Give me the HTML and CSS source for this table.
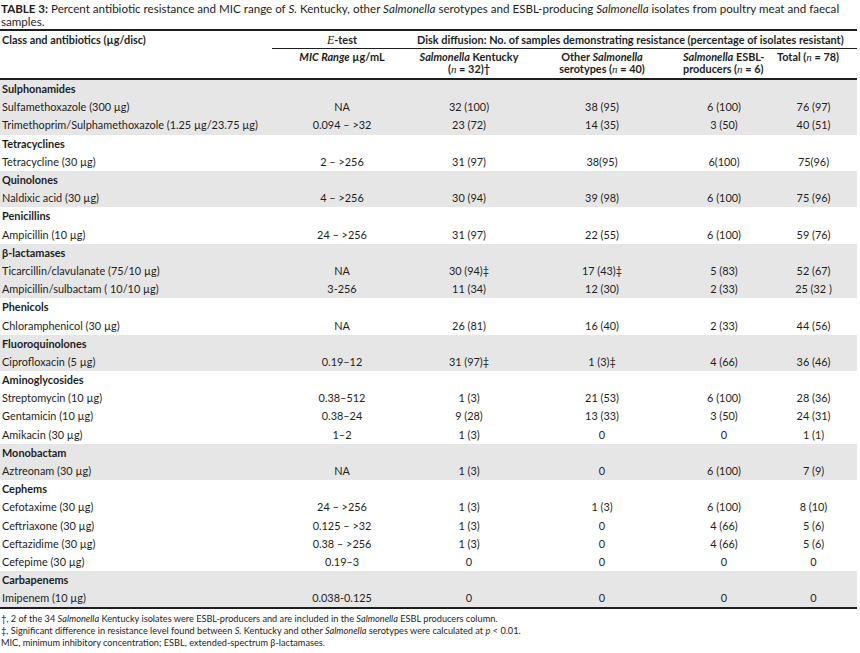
FILE: index.html
```html
<!DOCTYPE html>
<html>
<head>
<meta charset="utf-8">
<link rel="stylesheet" href="styles.css">
</head>
<body>
<p class="title"><b>TABLE 3:</b> Percent antibiotic resistance and MIC range of <i>S.</i> Kentucky, other <i>Salmonella</i> serotypes and ESBL-producing <i>Salmonella</i> isolates from poultry meat and faecal<br><span>samples.</span></p>
<table class="tbl">
<colgroup>
<col class="c1"><col class="c2"><col class="c3"><col class="c4"><col class="c5"><col class="c6">
</colgroup>
<thead>
<tr class="h1">
<th class="lead" rowspan="2">Class and antibiotics (µg/disc)</th>
<th class="etest"><span class="serif-i">E</span>-test</th>
<th class="disk" colspan="4">Disk diffusion: No. of samples demonstrating resistance (percentage of isolates resistant)</th>
</tr>
<tr class="h2">
<th class="mid"><i>MIC Range</i> µg/mL</th>
<th class="mid"><i>Salmonella</i> Kentucky<br>(<span class="n">n</span> = 32)†</th>
<th class="mid">Other <i>Salmonella</i><br>serotypes (<span class="n">n</span> = 40)</th>
<th class="left">
<i>Salmonella</i> ESBL-<br>producers (<span class="n">n</span> = 6)</th>
<th class="left tot">Total (<span class="n">n</span> = 78)</th>
</tr>
</thead>
<tbody class="gray">
<tr><td class="grp" colspan="6">Sulphonamides</td></tr>
<tr><td>Sulfamethoxazole (300 µg)</td><td>NA</td><td>32 (100)</td><td>38 (95)</td><td>6 (100)</td><td>76 (97)</td></tr>
<tr><td>Trimethoprim/Sulphamethoxazole (1.25 µg/23.75 µg)</td><td>0.094 – &gt;32</td><td>23 (72)</td><td>14 (35)</td><td>3 (50)</td><td>40 (51)</td></tr>
</tbody>
<tbody>
<tr><td class="grp" colspan="6">Tetracyclines</td></tr>
<tr><td>Tetracycline (30 µg)</td><td>2 – &gt;256</td><td>31 (97)</td><td>38(95)</td><td>6(100)</td><td>75(96)</td></tr>
</tbody>
<tbody class="gray">
<tr><td class="grp" colspan="6">Quinolones</td></tr>
<tr><td>Naldixic acid (30 µg)</td><td>4 – &gt;256</td><td>30 (94)</td><td>39 (98)</td><td>6 (100)</td><td>75 (96)</td></tr>
</tbody>
<tbody>
<tr><td class="grp" colspan="6">Penicillins</td></tr>
<tr><td>Ampicillin (10 µg)</td><td>24 – &gt;256</td><td>31 (97)</td><td>22 (55)</td><td>6 (100)</td><td>59 (76)</td></tr>
</tbody>
<tbody class="gray">
<tr><td class="grp" colspan="6">β-lactamases</td></tr>
<tr><td>Ticarcillin/clavulanate (75/10 µg)</td><td>NA</td><td>30 (94)‡</td><td>17 (43)‡</td><td>5 (83)</td><td>52 (67)</td></tr>
<tr><td>Ampicillin/sulbactam ( 10/10 µg)</td><td>3-256</td><td>11 (34)</td><td>12 (30)</td><td>2 (33)</td><td>25 (32 )</td></tr>
</tbody>
<tbody>
<tr><td class="grp" colspan="6">Phenicols</td></tr>
<tr><td>Chloramphenicol (30 µg)</td><td>NA</td><td>26 (81)</td><td>16 (40)</td><td>2 (33)</td><td>44 (56)</td></tr>
</tbody>
<tbody class="gray">
<tr><td class="grp" colspan="6">Fluoroquinolones</td></tr>
<tr><td>Ciprofloxacin (5 µg)</td><td>0.19–12</td><td>31 (97)‡</td><td>1 (3)‡</td><td>4 (66)</td><td>36 (46)</td></tr>
</tbody>
<tbody>
<tr><td class="grp" colspan="6">Aminoglycosides</td></tr>
<tr><td>Streptomycin (10 µg)</td><td>0.38–512</td><td>1 (3)</td><td>21 (53)</td><td>6 (100)</td><td>28 (36)</td></tr>
<tr><td>Gentamicin (10 µg)</td><td>0.38–24</td><td>9 (28)</td><td>13 (33)</td><td>3 (50)</td><td>24 (31)</td></tr>
<tr><td>Amikacin (30 µg)</td><td>1–2</td><td>1 (3)</td><td>0</td><td>0</td><td>1 (1)</td></tr>
</tbody>
<tbody class="gray">
<tr><td class="grp" colspan="6">Monobactam</td></tr>
<tr><td>Aztreonam (30 µg)</td><td>NA</td><td>1 (3)</td><td>0</td><td>6 (100)</td><td>7 (9)</td></tr>
</tbody>
<tbody>
<tr><td class="grp" colspan="6">Cephems</td></tr>
<tr><td>Cefotaxime (30 µg)</td><td>24 – &gt;256</td><td>1 (3)</td><td>1 (3)</td><td>6 (100)</td><td>8 (10)</td></tr>
<tr><td>Ceftriaxone (30 µg)</td><td>0.125 – &gt;32</td><td>1 (3)</td><td>0</td><td>4 (66)</td><td>5 (6)</td></tr>
<tr><td>Ceftazidime (30 µg)</td><td>0.38 – &gt;256</td><td>1 (3)</td><td>0</td><td>4 (66)</td><td>5 (6)</td></tr>
<tr><td>Cefepime (30 µg)</td><td>0.19–3</td><td>0</td><td>0</td><td>0</td><td>0</td></tr>
</tbody>
<tbody class="gray last">
<tr><td class="grp" colspan="6">Carbapenems</td></tr>
<tr><td>Imipenem (10 µg)</td><td>0.038-0.125</td><td>0</td><td>0</td><td>0</td><td>0</td></tr>
</tbody>
</table>
<div class="notes">
<p>†, 2 of the 34 <i>Salmonella</i> Kentucky isolates were ESBL-producers and are included in the <i>Salmonella</i> ESBL producers column.</p>
<p>‡, Significant difference in resistance level found between <i>S.</i> Kentucky and other <i>Salmonella</i> serotypes were calculated at <i>p</i> &lt; 0.01.</p>
<p>MIC, minimum inhibitory concentration; ESBL, extended-spectrum β-lactamases.</p>
</div>
</body>
</html>
```
FILE: styles.css
```css
html, body {
  margin: 0;
  padding: 0;
  background: #fff;
}
body {
  font-family: "Lato", "Open Sans", sans-serif;
  font-size: 10.9px;
  color: #1e1e1e;
  width: 860px;
}
.title {
  margin: 2px 0 0 1px;
  line-height: 13px;
  height: 27px;
  font-size: 11.6px;
  white-space: nowrap;
}
.title b { font-weight: 700; }
.tbl {
  width: 857px;
  border-collapse: collapse;
  table-layout: fixed;
}
.c1 { width: 272px; }
.c2 { width: 140px; }
.c3 { width: 114px; }
.c4 { width: 152px; }
.c5 { width: 92px; }
.c6 { width: 87px; }
.tbl thead { border-top: 2px solid #1e1e1e; border-bottom: 2px solid #1e1e1e; }
.tbl th {
  font-weight: 700;
  padding: 0;
  line-height: 12px;
}
.h1 th { height: 17px; vertical-align: middle; }
.h1 .etest, .h1 .disk { border-bottom: 1px solid #1e1e1e; }
.lead { text-align: left; vertical-align: top !important; padding: 3px 0 0 2px !important; }
.etest { text-align: center; }
.serif-i { font-family: "Liberation Serif", serif; font-style: italic; font-size: 12px; font-weight: 400; }
.disk { text-align: left; padding-left: 5px !important; white-space: nowrap; }
.h2 th { height: 27px; vertical-align: top; padding-top: 2px; }
.h2 .mid { text-align: center; }
.h2 .left { text-align: left; padding-left: 5px; }
.h2 .tot { padding-left: 7px; }
.n { font-family: "Liberation Serif", serif; font-style: italic; font-weight: 400; font-size: 11px; }
.tbl td {
  height: 18.2px;
  padding: 0;
  line-height: 12px;
  text-align: center;
  vertical-align: middle;
  white-space: nowrap;
}
.tbl td:first-child { text-align: left; padding-left: 2px; }
.tbl td.grp { font-weight: 700; }
.gray td { background: #e6e6e6; }
.last { border-bottom: 2px solid #1e1e1e; }
.notes { margin: 4px 0 0 1px; }
.notes p { margin: 0; line-height: 12px; font-size: 9.2px; }
```
